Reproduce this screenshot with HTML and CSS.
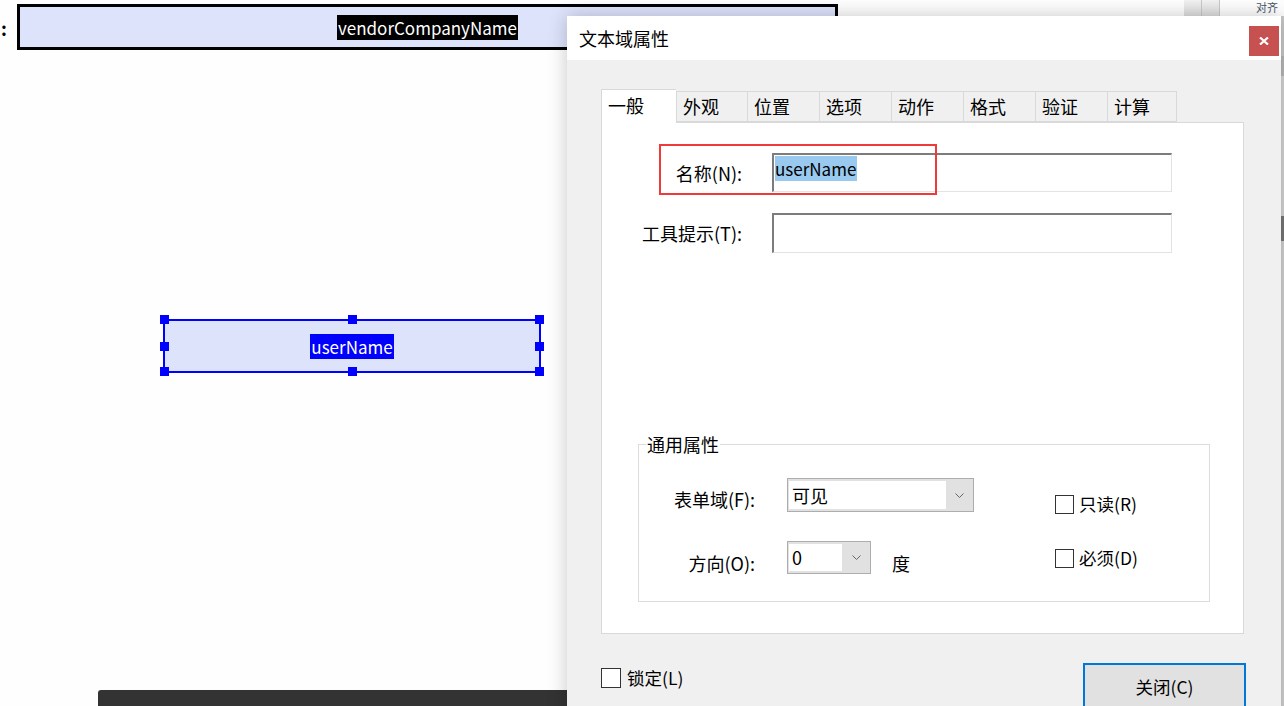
FILE: index.html
```html
<!DOCTYPE html>
<html lang="zh-CN">
<head>
    <meta charset="UTF-8">
    <title>文本域属性</title>
    <link rel="stylesheet" href="styles.css">
</head>
<body>

<div class="canvas">
    <!-- form fields on the design canvas -->
    <span class="colon">:</span>
    <div class="field vendor"><span class="field-text">vendorCompanyName</span></div>

    <div class="field user">
        <span class="field-text sel-blue">userName</span>
        <i class="handle tl"></i><i class="handle tm"></i><i class="handle tr"></i>
        <i class="handle ml"></i><i class="handle mr"></i>
        <i class="handle bl"></i><i class="handle bm"></i><i class="handle br"></i>
    </div>

    <div class="dark-bar"></div>

    <!-- bits of the app behind the dialog -->
    <div class="app-toolbar">
        <span class="tb-cell"></span><span class="tb-cell"></span><span class="tb-text">对齐</span>
    </div>
    <div class="app-edge"></div>

    <!-- properties dialog -->
    <div class="dialog">
        <div class="dialog-title">
            <span>文本域属性</span>
            <button class="close-x">
                <svg width="10" height="8" viewBox="0 0 10 8"><path d="M1 0.5 L9 7.5 M9 0.5 L1 7.5" stroke="#fff" stroke-width="2.2"/></svg>
            </button>
        </div>

        <div class="dialog-body">
            <div class="tabs">
                <div class="tab active">一般</div>
                <div class="tab">外观</div>
                <div class="tab">位置</div>
                <div class="tab">选项</div>
                <div class="tab">动作</div>
                <div class="tab">格式</div>
                <div class="tab">验证</div>
                <div class="tab">计算</div>
            </div>

            <div class="tab-panel">
                <div class="name-grid">
                    <label class="row-label">名称(N):</label>
                    <div class="textbox"><span class="sel">userName</span></div>
                    <label class="row-label">工具提示(T):</label>
                    <div class="textbox"></div>
                </div>

                <!-- red annotation box -->
                <div class="annot"></div>

                <fieldset class="group">
                    <legend>通用属性</legend>
                    <div class="group-grid">
                        <label class="g-label l1">表单域(F):</label>
                        <div class="combo wide">
                            <span class="combo-value">可见</span>
                            <span class="combo-arrow"><svg width="9" height="5" viewBox="0 0 9 5"><polyline points="0.5,0.5 4.5,4.5 8.5,0.5" fill="none" stroke="#666" stroke-width="1"/></svg></span>
                        </div>
                        <label class="check c1"><span class="box"></span>只读(R)</label>

                        <label class="g-label l2">方向(O):</label>
                        <div class="angle">
                            <div class="combo narrow">
                                <span class="combo-value">0</span>
                                <span class="combo-arrow"><svg width="9" height="5" viewBox="0 0 9 5"><polyline points="0.5,0.5 4.5,4.5 8.5,0.5" fill="none" stroke="#666" stroke-width="1"/></svg></span>
                            </div>
                            <span class="unit">度</span>
                        </div>
                        <label class="check c2"><span class="box"></span>必须(D)</label>
                    </div>
                </fieldset>
            </div>

            <div class="dialog-footer">
                <label class="check lock"><span class="box big"></span>锁定(L)</label>
                <button class="btn-close">关闭(C)</button>
            </div>
        </div>
    </div>
</div>

</body>
</html>
```

FILE: styles.css
```css
body {
    margin: 0;
    background-color: #ffffff;
    font-family: "Noto Sans CJK SC", "Noto Sans", sans-serif;
    color: #000;
    overflow: hidden;
}
.canvas {
    position: relative;
    width: 1284px;
    height: 706px;
    overflow: hidden;
    background-color: #fefefe;
}

/* Design canvas fields */
.colon {
    position: absolute;
    left: 1px;
    top: 16px;
    font-size: 18px;
    font-weight: bold;
    line-height: 24px;
}
.field {
    position: absolute;
    box-sizing: border-box;
    background-color: #dde3fb;
    display: flex;
    align-items: center;
    justify-content: center;
}
.field.vendor {
    left: 17px;
    top: 4px;
    width: 821px;
    height: 46px;
    border: 3px solid #000;
}
.field.user {
    left: 163px;
    top: 319px;
    width: 378px;
    height: 54px;
    border: 2px solid #0000ff;
}
.field-text {
    background-color: #000;
    color: #fff;
    font-size: 17px;
    line-height: 25px;
    padding: 0 1px;
}
.field-text.sel-blue {
    background-color: #0000ff;
    font-size: 17px;
}
.handle {
    position: absolute;
    width: 9px;
    height: 9px;
    background-color: #0000ff;
}
.handle.tl { left: -5px; top: -6px; }
.handle.tm { left: 50%; top: -6px; margin-left: -4px; }
.handle.tr { right: -5px; top: -6px; }
.handle.ml { left: -5px; top: 50%; margin-top: -4px; }
.handle.mr { right: -5px; top: 50%; margin-top: -4px; }
.handle.bl { left: -5px; bottom: -5px; }
.handle.bm { left: 50%; bottom: -5px; margin-left: -4px; }
.handle.br { right: -5px; bottom: -5px; }

.dark-bar {
    position: absolute;
    left: 98px;
    top: 690px;
    width: 480px;
    height: 20px;
    background-color: #333333;
    border-top-left-radius: 3px;
}

/* app chrome behind the dialog */
.app-toolbar {
    position: absolute;
    left: 1184px;
    top: 0;
    width: 100px;
    height: 16px;
    display: flex;
}
.tb-cell {
    width: 17px;
    height: 16px;
    background: linear-gradient(#f2f2f2, #dcdcdc);
    border-right: 1px solid #c8c8c8;
}
.tb-text {
    margin-left: 36px;
    font-size: 11px;
    line-height: 15px;
    color: #4a5666;
    white-space: nowrap;
}
.app-edge {
    position: absolute;
    right: 0;
    top: 16px;
    width: 3px;
    height: 690px;
    background: linear-gradient(#c9c9c9 0 40px, #b8b8b8 40px 60px, #d4d4d4 60px 200px, #777 200px 225px, #d2d2d2 225px);
}

/* Dialog */
.dialog {
    position: absolute;
    left: 567px;
    top: 16px;
    width: 714px;
    height: 710px;
    background-color: #f0f0f0;
    box-shadow: 0 0 18px rgba(0, 0, 0, 0.22);
}
.dialog-title {
    height: 44px;
    background-color: #ffffff;
    display: flex;
    align-items: center;
    justify-content: space-between;
    padding-left: 12px;
    font-size: 18px;
}
.close-x {
    align-self: flex-start;
    margin-top: 10px;
    margin-right: 2px;
    width: 30px;
    height: 30px;
    border: none;
    padding: 0;
    background-color: #c75050;
    display: flex;
    align-items: center;
    justify-content: center;
}
.dialog-body {
    padding: 29px 35px 0 34px;
}

/* Tabs */
.tabs {
    display: flex;
    align-items: flex-end;
    height: 33px;
}
.tab {
    box-sizing: border-box;
    width: 72px;
    height: 31px;
    padding-left: 6px;
    font-size: 18px;
    line-height: 29px;
    border: 1px solid #d9d9d9;
    border-right: none;
    background-color: #f0f0f0;
}
.tab:last-child {
    width: 70px;
    border-right: 1px solid #d9d9d9;
}
.tab.active {
    width: 75px;
    height: 34px;
    line-height: 31px;
    background-color: #ffffff;
    border-bottom: none;
    margin-bottom: -1px;
    position: relative;
    z-index: 1;
}
.tab.active + .tab {
    width: 71px;
}

.tab-panel {
    position: relative;
    box-sizing: border-box;
    width: 643px;
    height: 512px;
    background-color: #ffffff;
    border: 1px solid #d9d9d9;
    display: flex;
    flex-direction: column;
}
.name-grid {
    display: grid;
    grid-template-columns: 140px 400px;
    column-gap: 30px;
    row-gap: 21px;
    padding-top: 30px;
    align-items: center;
}
.row-label {
    text-align: right;
    font-size: 18px;
    line-height: 22px;
}
.textbox {
    box-sizing: border-box;
    height: 39px;
    background-color: #fff;
    border-top: 2px solid #7c7c7c;
    border-left: 2px solid #7c7c7c;
    border-right: 1px solid #e3e3e3;
    border-bottom: 1px solid #e3e3e3;
    padding: 1px 0 0 1px;
}
.textbox + .row-label + .textbox {
    height: 40px;
}
.sel {
    display: inline-block;
    background-color: #99c9ef;
    font-size: 17px;
    line-height: 25px;
    padding-right: 1px;
}
.annot {
    position: absolute;
    left: 57px;
    top: 21px;
    width: 278px;
    height: 51px;
    box-sizing: border-box;
    border: 2px solid #ef3a3a;
}

/* group box */
.group {
    margin: auto 33px 31px 36px;
    padding: 0;
    min-width: 0;
    border: 1px solid #dcdcdc;
}
.group legend {
    margin-left: 7px;
    padding: 0 1px;
    font-size: 18px;
    line-height: 20px;
}
.group-grid {
    display: grid;
    grid-template-columns: 116px 236px auto;
    column-gap: 32px;
    row-gap: 27px;
    align-items: start;
    padding: 24px 0 26px;
}
.g-label {
    text-align: right;
    font-size: 18px;
    line-height: 24px;
}
.g-label.l1 { margin-top: 9px; }
.g-label.l2 { margin-top: 10px; }

.combo {
    box-sizing: border-box;
    display: flex;
    border: 1px solid #adadad;
    background-color: #e1e1e1;
    padding: 2px 0 2px 1px;
}
.combo.wide {
    width: 187px;
    height: 34px;
}
.combo.narrow {
    width: 84px;
    height: 33px;
}
.combo-value {
    flex: 1;
    background-color: #fff;
    padding-left: 3px;
    font-size: 18px;
    line-height: 28px;
}
.combo.narrow .combo-value {
    line-height: 27px;
}
.combo-arrow {
    width: 27px;
    display: flex;
    align-items: center;
    justify-content: center;
}
.combo.narrow .combo-arrow {
    width: 28px;
}
.angle {
    display: flex;
    align-items: flex-start;
}
.unit {
    margin-left: 21px;
    margin-top: 10px;
    font-size: 18px;
    line-height: 24px;
}

.check {
    display: flex;
    align-items: center;
    font-size: 17.5px;
    line-height: 20px;
}
.check .box {
    box-sizing: border-box;
    width: 19px;
    height: 19px;
    border: 1px solid #333;
    background-color: #fff;
    margin-right: 5px;
}
.check.c1 { margin-top: 16px; }
.check.c2 { margin-top: 7px; }

/* footer */
.dialog-footer {
    display: flex;
    justify-content: space-between;
    align-items: flex-start;
    margin-top: 29px;
}
.check.lock {
    margin-top: 5px;
}
.check .box.big {
    width: 20px;
    height: 20px;
    margin-right: 6px;
}
.btn-close {
    width: 163px;
    height: 46px;
    border: 2px solid #0078d7;
    background-color: #e1e1e1;
    font-family: "Noto Sans CJK SC", "Noto Sans", sans-serif;
    font-size: 17.5px;
    color: #000;
    padding: 0;
}
```
